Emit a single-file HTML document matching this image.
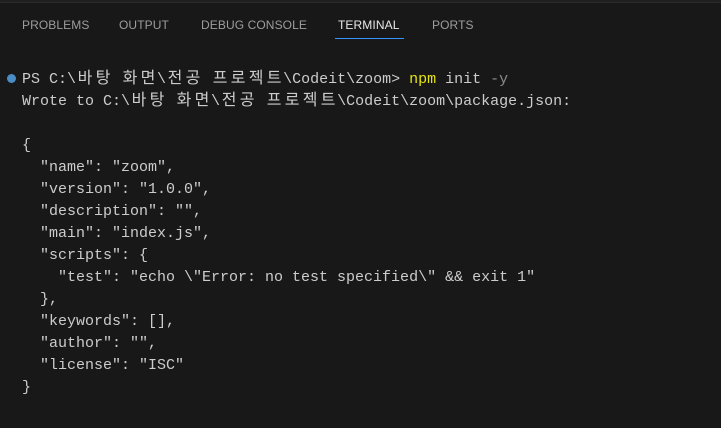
<!DOCTYPE html>
<html><head><meta charset="utf-8"><style>
html,body{margin:0;padding:0;background:#181818;width:721px;height:428px;overflow:hidden;position:relative}
.top{position:absolute;left:0;top:0;width:721px;height:2px;background:#1f1f1f;border-bottom:1px solid #2b2b2b}
.tab{position:absolute;top:17px;font:12px "Liberation Sans",sans-serif;color:#9d9d9d;line-height:16px;letter-spacing:0.1px}
.act{color:#e7e7e7}
.ul{position:absolute;left:335px;top:38px;width:69px;height:1px;background:#3794ff}
.term{position:absolute;left:22px;top:69px;font:15px "Liberation Mono","Noto Sans CJK KR",monospace;color:#cccccc;line-height:22px;white-space:pre}
.k{display:inline-block;width:18px;text-align:center;font-size:16px;line-height:16px}
.y{color:#e5e510}
.g{color:#8c8c8c}
.dot{position:absolute;left:7px;top:74px;width:9px;height:9px;border-radius:50%;background:#4a8cc4}
</style></head><body>
<div class="top"></div>
<div class="tab" style="left:22px">PROBLEMS</div>
<div class="tab" style="left:119px">OUTPUT</div>
<div class="tab" style="left:201px">DEBUG CONSOLE</div>
<div class="tab act" style="left:338px">TERMINAL</div>
<div class="tab" style="left:432px">PORTS</div>
<div class="ul"></div>
<div class="dot"></div>
<div class="term">PS C:\<span class="k">바</span><span class="k">탕</span> <span class="k">화</span><span class="k">면</span>\<span class="k">전</span><span class="k">공</span> <span class="k">프</span><span class="k">로</span><span class="k">젝</span><span class="k">트</span>\Codeit\zoom&gt; <span class="y">npm</span> init <span class="g">-y</span>
Wrote to C:\<span class="k">바</span><span class="k">탕</span> <span class="k">화</span><span class="k">면</span>\<span class="k">전</span><span class="k">공</span> <span class="k">프</span><span class="k">로</span><span class="k">젝</span><span class="k">트</span>\Codeit\zoom\package.json:

{
  "name": "zoom",
  "version": "1.0.0",
  "description": "",
  "main": "index.js",
  "scripts": {
    "test": "echo \"Error: no test specified\" &amp;&amp; exit 1"
  },
  "keywords": [],
  "author": "",
  "license": "ISC"
}</div>
</body></html>
